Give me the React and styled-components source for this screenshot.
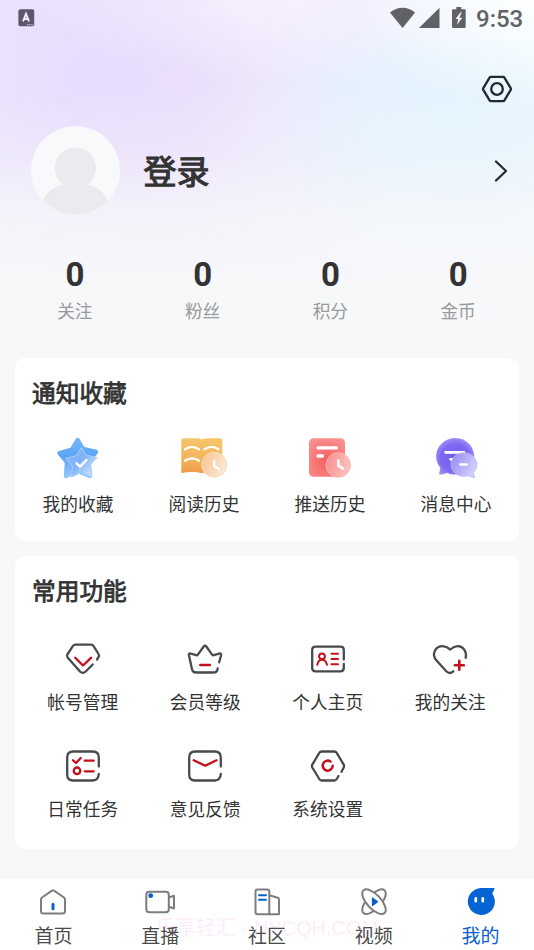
import React from "react";
import styled, { createGlobalStyle } from "styled-components";

const DARK = "#474b4e";
const RED = "#c4101c";
const BLUE = "#0860cf";

const stats = ["关注", "粉丝", "积分", "金币"];

const notices = [
  { label: "我的收藏", Icon: StarIcon },
  { label: "阅读历史", Icon: BookIcon },
  { label: "推送历史", Icon: PushIcon },
  { label: "消息中心", Icon: MessageIcon },
];

const functions = [
  { label: "帐号管理", Icon: AccountIcon },
  { label: "会员等级", Icon: CrownIcon },
  { label: "个人主页", Icon: CardIcon },
  { label: "我的关注", Icon: HeartIcon },
  { label: "日常任务", Icon: TaskIcon },
  { label: "意见反馈", Icon: MailIcon },
  { label: "系统设置", Icon: SystemIcon },
];

const tabs = [
  { label: "首页", Icon: HomeIcon },
  { label: "直播", Icon: LiveIcon },
  { label: "社区", Icon: CommunityIcon },
  { label: "视频", Icon: VideoIcon },
  { label: "我的", Icon: MineIcon, active: true },
];

export default function App() {
  return (
    <>
      <GlobalStyle />
      <Screen>
        <StatusBar>
          <KeyboardIcon />
          <StatusIcons />
          <Clock>9:53</Clock>
        </StatusBar>
        <Toolbar>
          <SettingsIcon />
        </Toolbar>
        <Profile>
          <Avatar />
          <LoginText>登录</LoginText>
          <ChevronIcon />
        </Profile>
        <Stats>
          {stats.map((label) => (
            <Stat key={label}>
              <StatValue>0</StatValue>
              <StatLabel>{label}</StatLabel>
            </Stat>
          ))}
        </Stats>

        <Card $height={183}>
          <CardTitle>通知收藏</CardTitle>
          <NoticeGrid>
            {notices.map(({ label, Icon }) => (
              <Entry key={label}>
                <Icon />
                <EntryLabel $gap={7.5}>{label}</EntryLabel>
              </Entry>
            ))}
          </NoticeGrid>
        </Card>

        <Card $height={293}>
          <CardTitle>常用功能</CardTitle>
          <FunctionGrid>
            {functions.map(({ label, Icon }) => (
              <Entry key={label}>
                <Icon />
                <EntryLabel $gap={10}>{label}</EntryLabel>
              </Entry>
            ))}
          </FunctionGrid>
        </Card>

        <TabBar>
          {tabs.map(({ label, Icon, active }) => (
            <Tab key={label} $active={active}>
              <Icon />
              <span>{label}</span>
            </Tab>
          ))}
          <Watermark>乐享轻汇 · NYCQH.COM</Watermark>
        </TabBar>
      </Screen>
    </>
  );
}

function KeyboardIcon() {
  return (
    <svg width="17" height="18" viewBox="0 0 17 18">
      <rect x="0.4" y="0.3" width="15.8" height="17" rx="2" fill="#5f566c" />
      <path
        d="M5 12.3 8 4.8l3 7.5M6 10h4"
        fill="none"
        stroke="#f3ecfb"
        strokeWidth="1.9"
      />
      <path d="M9 15.7h6" stroke="#d9d0e4" strokeWidth="1" strokeDasharray="1.4 0.8" />
    </svg>
  );
}

function StatusIcons() {
  return (
    <svg width="78" height="22" viewBox="0 0 78 22" fill="#606265">
      <path d="M0 5.6C7.500-1 17.600-1 25.100 5.600L12.600 21Z" />
      <path d="M49.500 .8V21H29Z" />
      <path
        fillRule="evenodd"
        d="M66.300 0h5v2.200h3.200c.8 0 1.200.4 1.200 1.200v16.300c0 .8-.4 1.200-1.200 1.200H63.200c-.8 0-1.200-.4-1.200-1.200V3.400c0-.8.4-1.200 1.200-1.200h3.100ZM70.600 5.300l-5 6.800h2.700l-1.400 6 5.300-7.300h-2.900l2.500-5.500Z"
      />
    </svg>
  );
}

function SettingsIcon() {
  return (
    <svg width="32" height="30" viewBox="0 0 32 30" fill="none" stroke="#222a30" strokeWidth="2.3">
      <path
        d="M9.700 2.900h12.600q.7 0 1.100.7l6.300 10.500q.5.900 0 1.800L23.400 26.400q-.4.700-1.100.7H9.700q-.7 0-1.100-.7L2.300 15.900q-.5-.9 0-1.800L8.600 3.600q.4-.7 1.100-.7Z"
        strokeLinejoin="round"
      />
      <circle cx="16" cy="15" r="5.800" />
    </svg>
  );
}

function Avatar() {
  return (
    <svg width="89" height="89" viewBox="0 0 89 89">
      <circle cx="44.500" cy="44.500" r="44.500" fill="#f8f9fb" />
      <circle cx="44.500" cy="42" r="20.500" fill="#e9ebef" />
      <path
        d="M12 74.500C19 61 31 57 44.500 57S70 61 77 74.500A44.500 44.500 0 0 1 12 74.500Z"
        fill="#e9ebef"
      />
    </svg>
  );
}

function ChevronIcon() {
  return (
    <svg width="16" height="24" viewBox="0 0 16 24" fill="none">
      <path
        d="M3 2.500 13 12 3 21.500"
        stroke="#262b31"
        strokeWidth="2.300"
        strokeLinecap="round"
        strokeLinejoin="round"
      />
    </svg>
  );
}

function StarIcon() {
  return (
    <svg width="48" height="48" viewBox="0 0 48 48" strokeLinejoin="round">
      <defs>
        <linearGradient id="starBack" x1="0" y1="0" x2="0" y2="1">
          <stop offset="0" stopColor="#6fb6f8" />
          <stop offset="0.45" stopColor="#5da5f5" />
          <stop offset="1" stopColor="#8fc5fb" />
        </linearGradient>
        <linearGradient id="starFront" x1="0" y1="0" x2="1" y2="0.8">
          <stop offset="0" stopColor="#85baf9" />
          <stop offset="0.5" stopColor="#7fb1f8" />
          <stop offset="1" stopColor="#d3e4fe" />
        </linearGradient>
      </defs>
      <path
        d="M23.700 5 29 14 42 17 34.500 26 36 41 23.500 36 12 41 13 27 5.500 18 18 14.500Z"
        fill="url(#starBack)"
        stroke="url(#starBack)"
        strokeWidth="4.400"
      />
      <path
        d="M27.500 12.500 31.800 20 43 22.500 36 30 38 42 27.500 37.500 17.500 42 18.500 31 11.500 23.500 22.500 20.500Z"
        fill="url(#starFront)"
        stroke="#a9d0fc"
        strokeWidth="1"
      />
      <path
        d="M22.500 28.300 26 31.700 32.500 25"
        fill="none"
        stroke="#fff"
        strokeWidth="2.500"
        strokeLinecap="round"
      />
    </svg>
  );
}

function BookIcon() {
  return (
    <svg width="48" height="48" viewBox="0 0 48 48" fill="none">
      <defs>
        <linearGradient id="book" x1="0.3" y1="0" x2="0.2" y2="1">
          <stop offset="0" stopColor="#f7c56b" />
          <stop offset="0.6" stopColor="#f3b45b" />
          <stop offset="1" stopColor="#ee9a4a" />
        </linearGradient>
        <linearGradient id="bookClock" x1="0" y1="0" x2="1" y2="0.4">
          <stop offset="0" stopColor="#f6c28b" />
          <stop offset="1" stopColor="#fce7d3" />
        </linearGradient>
      </defs>
      <path
        d="M1.300 6c0-2 1-2.700 3-2.700h11c3 0 4.500.3 6.500 1.200 2-.9 3.500-1.200 6.500-1.200h11c2 0 3 .7 3 2.700v31.500c-8-1-15-1-20.500.7-5.500-1.700-12.500-1.700-20.500-.3Z"
        fill="url(#book)"
      />
      <path
        d="M5 14.200Q12 9.500 19 14.200M24.500 14.200Q31.500 9.500 38.500 14.200M5 25.700Q12 21 19 25.700"
        stroke="#fff"
        strokeWidth="2.400"
        strokeLinecap="round"
      />
      <circle cx="34.200" cy="29.700" r="12.500" fill="url(#bookClock)" stroke="#fbdcb8" />
      <path
        d="M34.200 26v5l4.500 2.700"
        stroke="#fff"
        strokeWidth="2.500"
        strokeLinecap="round"
        strokeLinejoin="round"
      />
    </svg>
  );
}

function PushIcon() {
  return (
    <svg width="48" height="48" viewBox="0 0 48 48" fill="none" strokeLinecap="round">
      <defs>
        <radialGradient id="push" cx="0.5" cy="0.6" r="0.7">
          <stop offset="0" stopColor="#f45e5f" />
          <stop offset="1" stopColor="#fa9390" />
        </radialGradient>
        <linearGradient id="pushClock" x1="0" y1="0" x2="1" y2="0.300">
          <stop offset="0" stopColor="#f98a89" />
          <stop offset="1" stopColor="#fcc1bf" />
        </linearGradient>
      </defs>
      <rect x="3" y="3.300" width="36" height="38.400" rx="4.500" fill="url(#push)" />
      <path d="M12 12.800h18.500M12 21h4.500" stroke="#fff" strokeWidth="3.300" />
      <circle cx="32.300" cy="30" r="12.300" fill="url(#pushClock)" stroke="#fcb7b4" />
      <path
        d="M32.300 25.500v5.200l4.500 2.600"
        stroke="#fff"
        strokeWidth="2.600"
        strokeLinejoin="round"
      />
    </svg>
  );
}

function MessageIcon() {
  return (
    <svg width="48" height="48" viewBox="0 0 48 48" fill="none" strokeLinecap="round">
      <defs>
        <radialGradient id="msg" cx="0.5" cy="0.55" r="0.55">
          <stop offset="0" stopColor="#735ced" />
          <stop offset="0.7" stopColor="#8069f1" />
          <stop offset="1" stopColor="#a18ff8" />
        </radialGradient>
        <linearGradient id="msgFront" x1="0" y1="0" x2="1" y2="0.500">
          <stop offset="0" stopColor="#9485f3" />
          <stop offset="1" stopColor="#cfd0fd" />
        </linearGradient>
      </defs>
      <path
        d="M8 39.500c-.9 0-1.100-.7-.8-1.500l1.200-5.200A19 18.300 0 1 1 30 38.300c-5.500 2-11 1.500-15-.6-2 1.200-4.500 1.900-7 1.800Z"
        fill="url(#msg)"
      />
      <path d="M13.500 17.300h18.500M18.500 24.300h4" stroke="#fff" strokeWidth="2.700" />
      <path
        d="M42.300 42.300l-1-4.800A12.800 11.700 0 1 0 36 40.600c2 1 4.200 1.800 6.300 1.700Z"
        fill="url(#msgFront)"
        stroke="#bfb8fa"
      />
      <path d="M28.500 29.500h6" stroke="#fff" strokeWidth="2.700" />
    </svg>
  );
}

// Outline icons share one stroke setup, red details go on top
function LineIcon({ outline, children }) {
  return (
    <LineSvg width="40" height="40" viewBox="0 0 40 40">
      <path d={outline} stroke={DARK} />
      <g stroke={RED}>{children}</g>
    </LineSvg>
  );
}

function AccountIcon() {
  return (
    <LineIcon outline="M34 20.500 35.500 18.200q1-1.600 0-3.200L30.500 7q-.8-1.400-2.400-1.400H12.500q-1.600 0-2.500 1.300L4.300 15.500q-.8 1.500.3 2.900L17 32.500q2.900 2.900 5.700 0L29.700 25.500">
      <path d="M12.200 18.700 20 26.500 28.200 18.700" />
    </LineIcon>
  );
}

function CrownIcon() {
  return (
    <LineIcon outline="M34.200 23.300 36 16.500q.6-2.700-1.800-1.800l-5.400 1.500q-1.100.3-1.700-.6L21.300 7.500q-1.300-1.700-2.600 0L12.900 15.600q-.6.900-1.700.6L5.800 14.700q-2.400-.9-1.800 1.800L7 30.200q.8 3.300 4 3.300H28.500q3.800 0 4.200-4.200">
      <path d="M15.200 26h9.800" />
    </LineIcon>
  );
}

function CardIcon() {
  return (
    <LineIcon outline="M35.800 20.500V11q0-3.300-3.300-3.300h-25Q4.200 7.700 4.200 11v18q0 3.300 3.300 3.300h25q3.300 0 3.300-3.300V25">
      <circle cx="14" cy="17.300" r="2.900" strokeWidth="2" />
      <path
        d="M9.300 25.700Q10.300 20.700 14 20.700T19 25.700M23.500 14.700h6.500M23.500 20h6.500M23.500 25.300h6.500"
        strokeWidth="2"
      />
    </LineIcon>
  );
}

function HeartIcon() {
  return (
    <LineIcon outline="M35.700 18.800C37 13 33.500 7.500 28.300 7.200 25 7 22 9 20.300 10.500 18.500 9 15.500 7 12 7.200 4.500 7.700 1.700 16 6.300 21.300L16.500 32.500Q19.700 35.500 23.300 32.300">
      <path d="M24.800 26.300h9M29.300 21.800v9" strokeWidth="2.600" />
    </LineIcon>
  );
}

const squareOutline =
  "M35.800 20.500V11.500q0-6-6-6H10.200q-6 0-6 6v17q0 6 6 6h19.600q5.500 0 6-6.500";

function TaskIcon() {
  return (
    <LineIcon outline={squareOutline}>
      <path d="M10 14.300 13 17 17.700 12M21.700 14.700h9M21.700 25.300h9" />
      <circle cx="14" cy="24.800" r="3.300" />
    </LineIcon>
  );
}

function MailIcon() {
  return (
    <LineIcon outline={squareOutline}>
      <path d="M8.700 14.300 20.200 19.700 31.500 14.300" />
    </LineIcon>
  );
}

function SystemIcon() {
  return (
    <LineIcon outline="M33.500 25.700 35.700 21.500q.7-1.500 0-2.900L28.700 6.900q-.8-1.400-2.400-1.400H13.700q-1.600 0-2.400 1.400L4.300 18.600q-.7 1.400 0 2.900L11.300 33q.8 1.500 2.400 1.500h12.600q1.600 0 2.400-1.500L30.500 30">
      <path d="M22.500 15.500A5 5 0 1 0 24.700 19.800" strokeWidth="2.500" />
    </LineIcon>
  );
}

function HomeIcon() {
  return (
    <TabSvg>
      <path d="M17 4.700 27 11.500q1 .7 1 1.900V25q0 2.500-2.500 2.500h-19Q4 27.500 4 25V13.400q0-1.200 1-1.900L15 4.700q1-.7 2 0Z" />
      <path d="M16 18.200v4.500" stroke={BLUE} strokeWidth="3" />
    </TabSvg>
  );
}

function LiveIcon() {
  return (
    <TabSvg>
      <rect x="2.300" y="5.700" width="22.500" height="20.500" rx="3" />
      <path d="M25 11.500 30 9.700v12.800L25 20.800" />
      <circle cx="6.700" cy="9.700" r="2.400" fill={BLUE} stroke="none" />
    </TabSvg>
  );
}

function CommunityIcon() {
  return (
    <TabSvg>
      <path d="M18.300 28V5.500q0-2-2-2H6.500q-2 0-2 2v20.800q0 2 2 2H28V13.500q0-1.300-1.200-1.700l-8.500-2.500" />
      <path d="M8 9.300h7M8 13.700h7" stroke={BLUE} />
    </TabSvg>
  );
}

function VideoIcon() {
  return (
    <TabSvg>
      <ellipse cx="16" cy="15.700" rx="15.500" ry="7" transform="rotate(-47 16 15.700)" />
      <ellipse cx="16" cy="15.700" rx="15.500" ry="7" transform="rotate(47 16 15.700)" fill="#fff" />
      <path d="M14.500 12v7.500l5-3.800Z" fill={BLUE} stroke={BLUE} strokeWidth="1.200" />
    </TabSvg>
  );
}

function MineIcon() {
  return (
    <TabSvg>
      <path
        d="M16 2h12.600c1 0 1.200.8.600 1.500L27.200 7.500A13.500 13.500 0 1 1 16 2Z"
        fill="#0563d4"
        stroke="none"
      />
      <path d="M10.800 12.400v2.800M17.800 12.400v2.800" stroke="#fff" strokeWidth="2.700" />
    </TabSvg>
  );
}

const GlobalStyle = createGlobalStyle`
  body {
    margin: 0;
    font-family: "Noto Sans CJK SC", sans-serif;
    color: #333;
  }

  svg {
    display: block;
    flex-shrink: 0;
  }
`;

const Screen = styled.div`
  display: flex;
  flex-direction: column;
  width: 534px;
  height: 950px;
  overflow: hidden;
  background:
    linear-gradient(
      rgba(247, 248, 250, 0) 90px,
      rgba(247, 248, 250, 0.25) 150px,
      rgba(247, 248, 250, 0.75) 215px,
      #f7f8fa 290px
    ),
    radial-gradient(ellipse 180px 110px at 530px 0, #fdffff, rgba(253, 255, 255, 0)),
    radial-gradient(ellipse 260px 80px at 290px 0, rgba(248, 240, 254, 0.9), rgba(248, 240, 254, 0)),
    radial-gradient(
      ellipse 170px 170px at 85px 75px,
      rgba(230, 220, 253, 0.9),
      rgba(230, 220, 253, 0.45) 50%,
      rgba(230, 220, 253, 0)
    ),
    radial-gradient(
      ellipse 220px 200px at 455px 130px,
      rgba(226, 243, 253, 0.95),
      rgba(226, 243, 253, 0.5) 50%,
      rgba(226, 243, 253, 0)
    ),
    linear-gradient(
      90deg,
      #eee5fc 0,
      #ebdffb 130px,
      #ecdffa 175px,
      #eee5fb 250px,
      #ebeafc 320px,
      #e9f1fd 400px,
      #eef9fe 534px
    );
`;

const StatusBar = styled.div`
  display: flex;
  align-items: flex-start;
  height: 36px;
  box-sizing: border-box;
  padding: 7px 12px 0 18px;

  > svg:first-child {
    margin: 2px auto 0 0;
  }
`;

const Clock = styled.span`
  width: 46px;
  margin-left: 8px;
  font: 500 24px/24px Roboto, sans-serif;
  color: #606265;
  white-space: nowrap;
`;

const Toolbar = styled.div`
  display: flex;
  justify-content: flex-end;
  height: 90px;
  box-sizing: border-box;
  padding: 38px 21px 0 0;
`;

const Profile = styled.div`
  display: flex;
  align-items: center;
  height: 89px;
  padding: 0 25px 0 30.5px;
`;

const LoginText = styled.div`
  flex: 1;
  margin-left: 24px;
  padding-bottom: 2px;
  font-size: 33px;
  line-height: 40px;
  -webkit-text-stroke: 1.1px #333;
`;

const Stats = styled.div`
  display: grid;
  grid-template-columns: repeat(4, 1fr);
  height: 143px;
  box-sizing: border-box;
  padding: 40px 12px 0 11px;
`;

const Stat = styled.div`
  text-align: center;
`;

const StatValue = styled.div`
  font: 700 33px/40px Roboto, sans-serif;
`;

const StatLabel = styled.div`
  margin-top: 3px;
  font-size: 17.7px;
  line-height: 24px;
  color: #999;
`;

const Card = styled.section`
  height: ${(props) => props.$height}px;
  flex-shrink: 0;
  margin: 0 15px 15px;
  border-radius: 10px;
  background: #fff;
`;

const CardTitle = styled.h2`
  margin: 0;
  padding: 18px 17px 1px;
  font-size: 23.7px;
  line-height: 32px;
  font-weight: 400;
  -webkit-text-stroke: 0.8px #333;
`;

const NoticeGrid = styled.div`
  display: grid;
  grid-template-columns: repeat(4, 1fr);
  padding-top: 26px;
`;

const FunctionGrid = styled.div`
  display: grid;
  grid-template-columns: repeat(4, 1fr);
  grid-auto-rows: 107px;
  padding: 32px 7.5px 0 6.5px;
`;

const Entry = styled.div`
  display: flex;
  flex-direction: column;
  align-items: center;
`;

const EntryLabel = styled.span`
  margin-top: ${(props) => props.$gap}px;
  font-size: 17.7px;
  line-height: 24px;
`;

const LineSvg = styled.svg`
  fill: none;
  stroke-width: 2.3px;
  stroke-linecap: round;
  stroke-linejoin: round;
`;

const TabSvg = styled.svg.attrs({ width: 32, height: 32, viewBox: "0 0 32 32" })`
  fill: none;
  stroke: #7d7d7d;
  stroke-width: 2;
  stroke-linecap: round;
  stroke-linejoin: round;
`;

const TabBar = styled.nav`
  position: relative;
  display: grid;
  grid-template-columns: repeat(5, 1fr);
  height: 71px;
  margin-top: auto;
  background: #fff;
`;

const Tab = styled.div`
  display: flex;
  flex-direction: column;
  align-items: center;
  padding-top: 7px;
  font-size: 19px;
  line-height: 24px;
  color: ${(props) => (props.$active ? BLUE : "#4a4a4a")};

  span {
    margin-top: 5px;
  }
`;

const Watermark = styled.div`
  position: absolute;
  top: 37px;
  left: 156px;
  font-family: "Liberation Sans", "Noto Sans CJK SC", sans-serif;
  font-size: 20px;
  line-height: 24px;
  color: rgba(238, 130, 226, 0.17);
  white-space: nowrap;
`;
